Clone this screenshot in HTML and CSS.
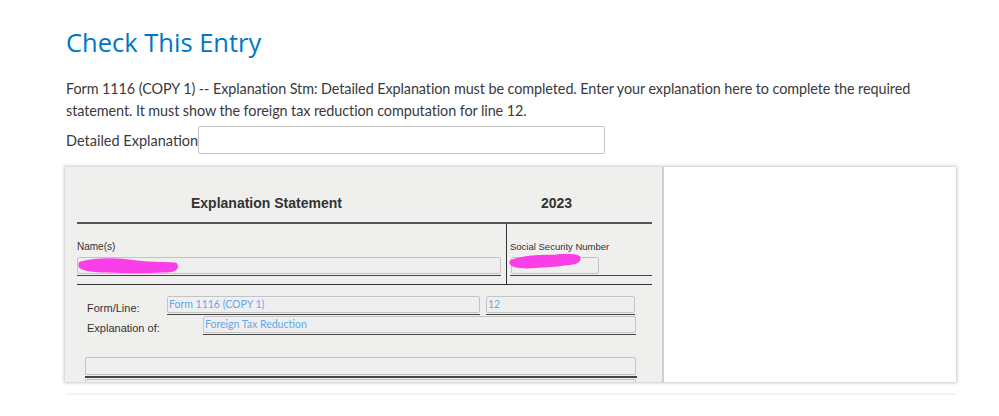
FILE: index.html
```html
<!DOCTYPE html>
<html>
<head>
<meta charset="utf-8">
<link rel="stylesheet" href="styles.css">
</head>
<body>
<div class="page">
  <h1 class="title">Check This Entry</h1>
  <p class="desc">Form 1116 (COPY 1) -- Explanation Stm: Detailed Explanation must be completed. Enter your explanation here to complete the required statement. It must show the foreign tax reduction computation for line 12.</p>
  <div class="field">
    <label class="field-label">Detailed Explanation</label>
    <div class="text-input"></div>
  </div>
  <div class="frame">
    <div class="form-panel">
      <div class="stmt-head">
        <div class="stmt-title">Explanation Statement</div>
        <div class="stmt-year">2023</div>
      </div>
      <div class="id-row">
        <div class="id-cell name-cell">
          <div class="small-label">Name(s)</div>
          <div class="box name-box">
            <svg class="scribble" width="110" height="20" viewBox="0 0 110 20"><path d="M4 8 C20 4 40 4 60 7 C75 9 90 8 98 9 C100 12 96 14 86 14 C70 15 50 15 30 14 C18 14 8 13 4 10" fill="#fb3fe8" stroke="#fb3fe8" stroke-width="5" stroke-linecap="round" stroke-linejoin="round"/></svg>
          </div>
          <div class="rule"></div>
        </div>
        <div class="id-cell ssn-cell">
          <div class="small-label">Social Security Number</div>
          <div class="box ssn-box">
            <svg class="scribble ssn-scribble" width="80" height="20" viewBox="0 0 80 20"><path d="M4 10 C15 6 30 5 48 5 C58 4 66 4 70 6 C71 9 66 10 56 11 C45 13 30 13 18 14 C10 14 5 13 4 11" fill="#fb3fe8" stroke="#fb3fe8" stroke-width="5" stroke-linecap="round" stroke-linejoin="round"/></svg>
          </div>
          <div class="rule"></div>
        </div>
      </div>
      <div class="detail">
        <div class="detail-row">
          <div class="detail-label">Form/Line:</div>
          <div class="boxed">
            <div class="box value form-box">Form 1116 (COPY 1)</div>
            <div class="rule"></div>
          </div>
          <div class="boxed">
            <div class="box value line-box">12</div>
            <div class="rule"></div>
          </div>
        </div>
        <div class="detail-row row2">
          <div class="detail-label">Explanation of:</div>
          <div class="boxed expl">
            <div class="box value expl-box">Foreign Tax Reduction</div>
            <div class="rule"></div>
          </div>
        </div>
        <div class="bottom-input">
          <div class="box big-box"></div>
          <div class="rule thick"></div>
          <div class="box cut-box"></div>
        </div>
      </div>
    </div>
    <div class="blank"></div>
  </div>
  <div class="footer-line"></div>
</div>
</body>
</html>
```

FILE: styles.css
```css
html, body {
  margin: 0;
  padding: 0;
  background: #ffffff;
}
.page {
  padding: 0 0 0 66px;
  width: 891px;
  font-family: "Lato", "Open Sans", sans-serif;
  color: #393a3d;
}
.title {
  margin: 0;
  padding-top: 24px;
  font-family: "Open Sans", sans-serif;
  font-size: 25.5px;
  font-weight: 400;
  line-height: 36px;
  color: #0077c5;
}
.desc {
  margin: 18px 0 0 0;
  font-size: 14.4px;
  letter-spacing: -0.08px;
  line-height: 22px;
  width: 885px;
}
.field {
  display: flex;
  align-items: center;
  margin-top: 4px;
}
.field-label {
  font-size: 14.5px;
  line-height: 22px;
  padding-top: 2px;
}
.text-input {
  width: 405px;
  height: 26px;
  border: 1px solid #c6c6c6;
  border-radius: 2px;
  background: #fff;
}
.frame {
  margin-top: 13px;
  margin-left: -1px;
  width: 891px;
  height: 215px;
  display: flex;
  box-shadow: 0 0 3px 1px rgba(0,0,0,0.22);
  overflow: hidden;
}
.form-panel {
  width: 597px;
  flex: none;
  background: #efefed;
  padding-left: 12px;
  box-sizing: border-box;
  font-family: "Liberation Sans", Arial, sans-serif;
  color: #333;
}
.blank {
  flex: 1;
  background: #fff;
  border-left: 2px solid #cfcfcf;
}
.stmt-head {
  display: grid;
  grid-template-columns: 430px 145px;
  width: 575px;
  height: 55px;
  align-items: end;
  border-bottom: 2px solid #555;
  font-size: 14px;
  font-weight: bold;
  color: #333;
}
.stmt-title {
  padding-left: 114px;
  padding-bottom: 11px;
}
.stmt-year {
  padding-left: 34px;
  padding-bottom: 11px;
}
.id-row {
  display: grid;
  grid-template-columns: 430px 145px;
  width: 575px;
  height: 60px;
  border-bottom: 1.5px solid #333;
}
.id-cell {
  padding-top: 17px;
  position: relative;
}
.name-cell {
  border-right: 1.5px solid #333;
}
.ssn-cell {
  padding-left: 3px;
}
.small-label {
  font-size: 10px;
  line-height: 12px;
  height: 16px;
  color: #333;
}
.ssn-cell .small-label {
  font-size: 9.5px;
}
.box {
  height: 15px;
  border: 1px solid #c4c4c4;
  border-radius: 2px;
  background: #efefef;
  box-sizing: content-box;
  position: relative;
}
.name-box {
  width: 422px;
}
.ssn-box {
  width: 86px;
  margin-left: 1px;
}
.rule {
  height: 0;
  border-top: 1.5px solid #444;
  margin-top: 1px;
}
.name-cell .rule {
  width: 424px;
}
.ssn-cell .rule {
  width: 142px;
}
.scribble {
  position: absolute;
  left: -1px;
  top: -2px;
}
.ssn-scribble {
  left: -4px;
  top: -6px;
}
.detail {
  padding-top: 11px;
  padding-left: 10px;
}
.detail-row {
  display: flex;
  align-items: flex-start;
}
.detail-label {
  font-size: 11px;
  width: 80px;
  padding-top: 6px;
  color: #333;
}
.value {
  font-family: "Lato", "Open Sans", sans-serif;
  font-size: 10.5px;
  line-height: 15px;
  color: #5fa9ee;
  padding-left: 1px;
}
.boxed {
  margin-right: 6px;
}
.form-box {
  width: 310px;
}
.line-box {
  width: 146px;
}
.row2 {
  margin-top: 1px;
}
.expl {
  margin-left: 36px;
}
.expl-box {
  width: 430px;
}
.bottom-input {
  margin-top: 22px;
  margin-left: -2px;
}
.big-box {
  width: 549px;
  height: 16px;
}
.thick {
  border-top: 2px solid #444;
  width: 552px;
}
.cut-box {
  width: 549px;
  margin-top: 1px;
}
.footer-line {
  margin-top: 11px;
  width: 890px;
  height: 2px;
  background: #f3f3f3;
}
```
